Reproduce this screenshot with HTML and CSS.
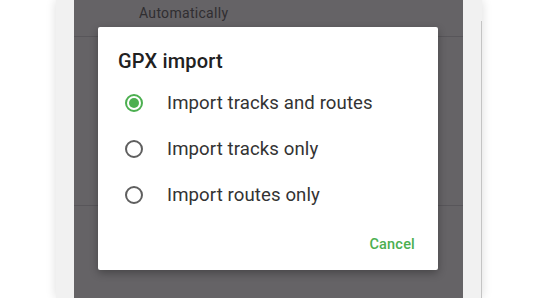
FILE: index.html
```html
<!DOCTYPE html>
<html lang="en">

<head>
    <meta charset="UTF-8">
    <meta name="viewport" content="width=device-width, initial-scale=1.0">
    <title>GPX import</title>
    <link rel="stylesheet" href="styles.css">
</head>

<body>
    <div class="frame">
        <div class="screen">
            <div class="setting-row">
                <span class="setting-value">Automatically</span>
            </div>
            <div class="setting-block"></div>
            <div class="setting-block rest"></div>

            <div class="dialog">
                <h2 class="dialog-title">GPX import</h2>
                <div class="options">
                    <label class="option">
                        <span class="radio checked"></span>
                        Import tracks and routes
                    </label>
                    <label class="option">
                        <span class="radio"></span>
                        Import tracks only
                    </label>
                    <label class="option">
                        <span class="radio"></span>
                        Import routes only
                    </label>
                </div>
                <div class="actions">
                    <button class="btn-text">Cancel</button>
                </div>
            </div>
        </div>
        <div class="scrollbar"></div>
    </div>
</body>

</html>
```

FILE: styles.css
```css
html,
body {
    overflow: hidden;
}

body {
    margin: 0;
    height: 298px;
    background-color: #fff;
    font-family: Roboto, "Noto Sans", Arial, sans-serif;
}

.frame {
    position: relative;
    margin-left: 56px;
    width: 426px;
    height: 298px;
    background-color: #f1f1f1;
    box-shadow: 0 0 10px rgba(0, 0, 0, 0.14);
    display: flex;
}

.screen {
    position: relative;
    margin-left: 18px;
    width: 389px;
    background-color: #656366;
}

.scrollbar {
    position: absolute;
    right: 0;
    top: 21px;
    bottom: 0;
    width: 1px;
    background-color: #c4c4c4;
}

.setting-row {
    height: 37px;
    border-bottom: 1px solid #58565a;
    box-sizing: border-box;
}

.setting-value {
    display: block;
    padding-left: 65px;
    line-height: 26px;
    font-size: 14px;
    color: #302e31;
    letter-spacing: 0.3px;
}

.setting-block {
    height: 168px;
    border-bottom: 1px solid #58565a;
}

.setting-block.rest {
    border-bottom: none;
}

.dialog {
    position: absolute;
    left: 24px;
    top: 27px;
    width: 340px;
    height: 243px;
    box-sizing: border-box;
    background-color: #fff;
    border-radius: 2px;
    box-shadow: 0 3px 8px rgba(0, 0, 0, 0.3);
    padding: 22px 0 8px;
}

.dialog-title {
    margin: 0;
    padding-left: 20px;
    font-size: 20px;
    line-height: 24px;
    font-weight: 500;
    color: #212121;
    letter-spacing: 0.2px;
}

.options {
    margin-top: 7px;
}

.option {
    display: flex;
    align-items: center;
    height: 46px;
    padding-left: 27px;
    font-size: 18.6px;
    color: #333;
    letter-spacing: 0.1px;
}

.radio {
    width: 14px;
    height: 14px;
    border: 2px solid #5f5f5f;
    border-radius: 50%;
    margin-right: 24px;
    flex-shrink: 0;
    position: relative;
}

.radio.checked {
    border-color: #4caf50;
}

.radio.checked::after {
    content: "";
    position: absolute;
    left: 2px;
    top: 2px;
    width: 10px;
    height: 10px;
    border-radius: 50%;
    background-color: #4caf50;
}

.actions {
    display: flex;
    justify-content: flex-end;
    margin-top: 8px;
    padding-right: 15px;
}

.btn-text {
    background: none;
    border: none;
    padding: 0 8px;
    height: 36px;
    font-family: inherit;
    font-size: 14.5px;
    font-weight: 500;
    color: #4caf50;
    letter-spacing: 0.2px;
    cursor: pointer;
}
```
